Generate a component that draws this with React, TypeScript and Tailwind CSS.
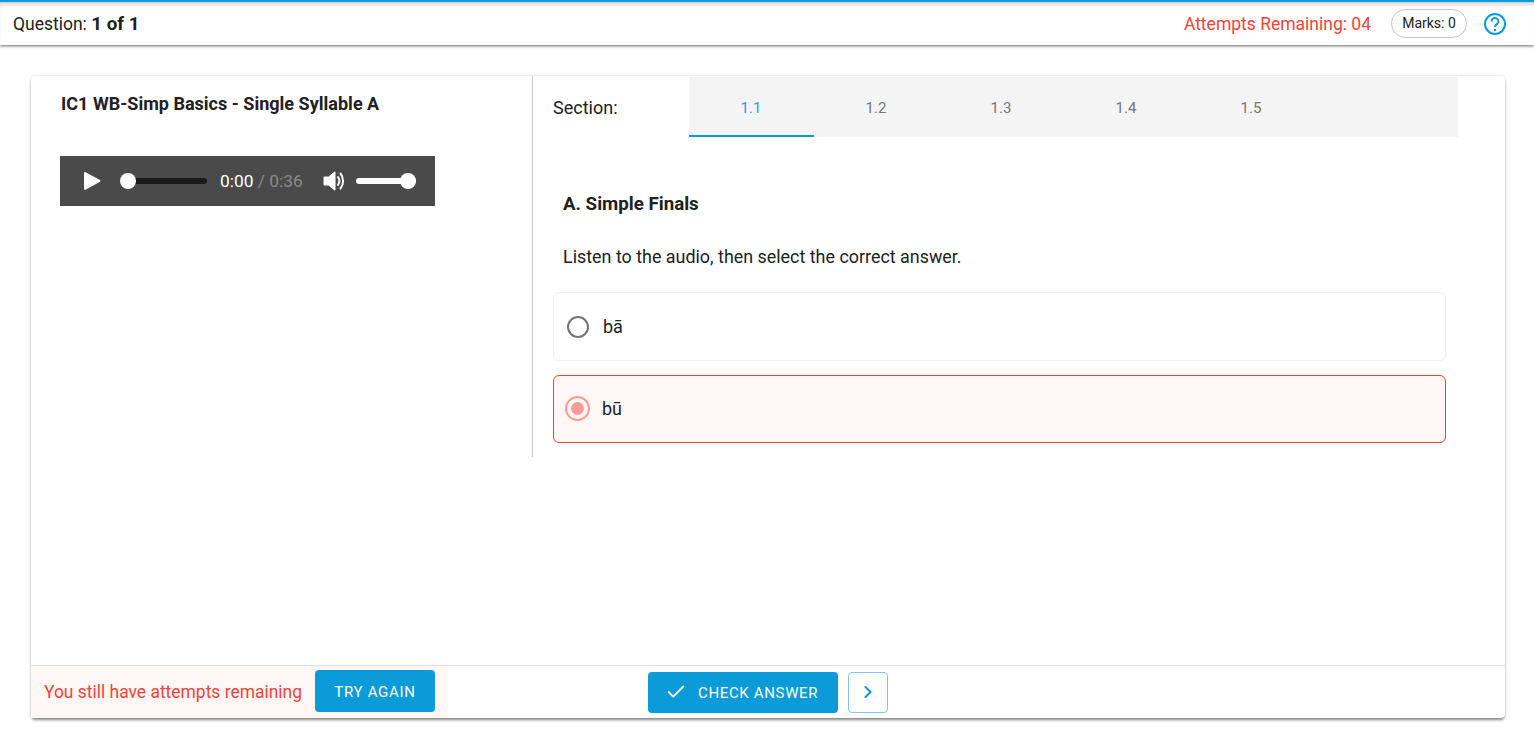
import React from 'react';
import { Check, ChevronRight } from 'lucide-react';

const tabs = ['1.1', '1.2', '1.3', '1.4', '1.5'];

function AudioPlayer() {
  return (
    <div className="flex h-[50px] w-[375px] items-center bg-[#4a4a4a] pl-[23px]">
      <svg width="18" height="20" viewBox="0 0 18 20" className="-mr-px shrink-0">
        <path d="M1 2.2v15.6c0 .9.9 1.4 1.6 1L17 10.8c.7-.4.7-1.3 0-1.7L2.6 1.2C1.9.8 1 1.3 1 2.2z" fill="#fff" />
      </svg>
      <div className="relative ml-5 h-[6px] w-[87px] rounded-full bg-[#1a1a1a]">
        <div className="absolute left-0 top-[-5px] h-4 w-4 rounded-full bg-white" />
      </div>
      <div className="ml-[13px] w-[83px] whitespace-nowrap text-[17.4px] text-white">
        0:00 <span className="text-[#8a8a8a]">/ 0:36</span>
      </div>
      <svg width="22" height="20" viewBox="0 0 22 20" className="ml-5 shrink-0">
        <path d="M1 6h4.5L12 .8v18.4L5.500 14H1z" fill="#fff" stroke="#fff" strokeLinejoin="round" />
        <path d="M15 6c1.600 2.300 1.600 5.700 0 8" fill="none" stroke="#fff" strokeWidth="2" strokeLinecap="round" />
        <path d="M17.500 2.500c3.400 4 3.400 11 0 15" fill="none" stroke="#fff" strokeWidth="2" strokeLinecap="round" />
      </svg>
      <div className="relative ml-[11px] h-[6px] w-[60px] rounded-full bg-white">
        <div className="absolute right-0 top-[-5px] h-4 w-4 rounded-full bg-white" />
      </div>
    </div>
  );
}

export default function App() {
  return (
    <div className="h-[749px] overflow-hidden bg-white font-['Roboto',sans-serif] text-[#212121]">
      {/* Top bar */}
      <div className="flex h-[45px] items-center justify-between border-t-2 border-[#0a9bd8] bg-white pl-[13px] pr-[27px] shadow-[0_1px_3px_rgba(0,0,0,0.6),inset_0_5px_5px_-3px_rgba(0,0,0,0.22)]">
        <div className="pt-[2px] text-[17.5px]">
          Question: <span className="text-[18.8px] font-bold">1 of 1</span>
        </div>
        <div className="flex items-center">
          <span className="pt-[2px] text-[17.5px] text-[#f44336]">Attempts Remaining: 04</span>
          <span className="ml-5 flex h-[29px] w-[76px] items-center justify-center rounded-full border border-[#c4c4c4] text-[14px]">
            Marks: 0
          </span>
          <svg width="24" height="24" viewBox="0 0 24 24" fill="none" className="ml-4">
            <circle cx="12" cy="12" r="10" stroke="#0a9bd8" strokeWidth="2" />
            <path d="M8.600 9.400a3.400 3.400 0 1 1 5.300 2.800c-1.200.8-1.900 1.400-1.900 2.800" stroke="#0a9bd8" strokeWidth="2" />
            <circle cx="12" cy="18" r="1.200" fill="#0a9bd8" />
          </svg>
        </div>
      </div>

      {/* Card */}
      <div className="ml-[31px] mr-[29px] mt-[31px] flex h-[642px] flex-col rounded-[4px] bg-white shadow-[0_0_3px_rgba(0,0,0,0.2),0_3px_3px_-1px_rgba(0,0,0,0.45)]">
        <div className="flex min-h-0 flex-1 items-start">
          <div className="h-[381px] w-[502px] shrink-0 border-r border-[#c8c8c8] pl-[29px]">
            <h1 className="ml-px mt-[15px] text-[18.05px] font-bold leading-[26px]">IC1 WB-Simp Basics - Single Syllable A</h1>
            <div className="mt-[39px]">
              <AudioPlayer />
            </div>
          </div>

          <div className="w-[972px] pl-5">
            <div className="mt-px flex h-[60px] items-center">
              <div className="w-[136px] pt-px text-[18px]">Section:</div>
              <div className="flex h-full w-[769px] bg-[#f4f4f4]">
                {tabs.map((tab, i) => (
                  <div
                    key={tab}
                    className={
                      i === 0
                        ? 'flex w-[125px] items-center justify-center border-b-2 border-[#0a9bd8] pr-px pt-[4px] text-[15px] text-[#2a9fdc]'
                        : 'flex w-[125px] items-center justify-center pr-px pt-[3px] text-[15px] text-[#757575]'
                    }
                  >
                    {tab}
                  </div>
                ))}
              </div>
            </div>

            <div className="pl-[10px]">
              <h2 className="mt-[54px] text-[18.7px] font-bold leading-[26px]">A. Simple Finals</h2>
              <p className="mt-[27px] text-[17.9px] leading-[26px]">Listen to the audio, then select the correct answer.</p>
            </div>

            <div className="mt-[22px] flex w-[893px] flex-col gap-[14px]">
              <div className="flex h-[69px] items-center rounded-[6px] border border-[#f0f0f0] pl-[13px]">
                <span className="h-[22px] w-[22px] rounded-full border-2 border-[#757575]" />
                <span className="ml-[14px] text-[18px]">bā</span>
              </div>
              <div className="flex h-[68px] items-center rounded-[6px] border border-[#f44336] bg-[#fff7f5] pb-[2px] pl-[11px]">
                <span className="flex h-[25px] w-[25px] items-center justify-center rounded-full border-2 border-[#ff9a94]">
                  <span className="h-[13px] w-[13px] rounded-full bg-[#ff9a94]" />
                </span>
                <span className="ml-3 text-[18px]">bū</span>
              </div>
            </div>
          </div>
        </div>

        {/* Footer */}
        <div className="flex h-[53px] items-center border-t border-[#e0e0e0]">
          <div className="flex h-full w-[417px] items-center bg-[#fff7f5] pl-[13px]">
            <span className="text-[17.45px] text-[#f44336]">You still have attempts remaining</span>
            <button className="mb-[2px] ml-[13px] flex h-[42px] w-[120px] items-center justify-center rounded-[4px] bg-[#0a9bd8] pt-[2px] text-[15px] tracking-[0.7px] text-white">
              TRY AGAIN
            </button>
          </div>
          <button className="ml-[200px] flex h-[41px] w-[190px] items-center rounded-[4px] bg-[#0a9bd8] pl-[17px] text-[15px] tracking-[0.65px] text-white">
            <Check size={22} strokeWidth={2} />
            <span className="ml-[11px] pt-[2px]">CHECK ANSWER</span>
          </button>
          <button className="ml-[10px] flex h-[41px] w-10 items-center justify-center rounded-[4px] border border-[#7cc8ea] text-[#0a9bd8]">
            <ChevronRight size={20} strokeWidth={2.5} />
          </button>
        </div>
      </div>
    </div>
  );
}
